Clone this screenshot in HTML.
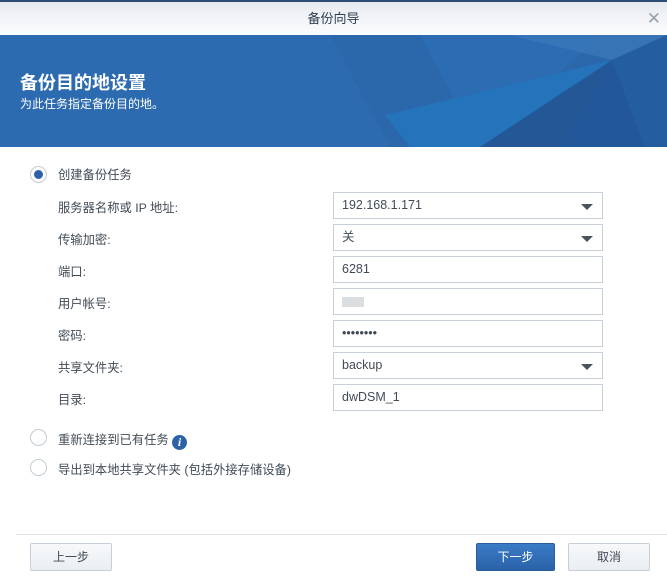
<!DOCTYPE html><html><head><meta charset="utf-8"><style>
*{margin:0;padding:0;box-sizing:border-box}
body{width:667px;height:579px;background:#fff;font-family:"Liberation Sans","Noto Sans CJK SC",sans-serif;font-size:12.3px;color:#414b55;position:relative;overflow:hidden}
.top{position:absolute;left:0;top:0;width:667px;height:2px;background:#2f4f78}
.tb{position:absolute;left:0;top:2px;width:667px;height:33px;background:linear-gradient(#e6eaf0,#fdfdfe);text-align:center;line-height:33px;font-size:13px;color:#2f3e50}
.x{position:absolute;right:6px;top:0;color:#9aa3ad;font-size:17px}
.ban{position:absolute;left:0;top:35px;width:667px;height:112px;background:#2d6bb0;overflow:hidden}
.ban h1{position:absolute;left:20px;top:34px;font-size:18px;color:#fff;font-weight:bold}
.ban p{position:absolute;left:20px;top:60px;font-size:12px;color:#fff}
.lab{position:absolute;left:58px}
.f{position:absolute;left:333px;width:270px;height:27px;border:1px solid #c7d0da;line-height:25px;padding-left:8px;font-size:12.5px;color:#414b55}
.f.dd:after{content:"";position:absolute;right:9px;top:11px;border-left:6px solid transparent;border-right:6px solid transparent;border-top:6px solid #4a535c}
.r{position:absolute;left:30px;width:17px;height:17px;border:1px solid #c3ccd6;border-radius:50%;background:#fff}
.r.on:after{content:"";position:absolute;left:3px;top:3px;width:9px;height:9px;border-radius:50%;background:#2c62a8}
.btn{position:absolute;top:543px;height:28px;border:1px solid #c6ced7;border-radius:2px;background:linear-gradient(#f7f9fb,#eaeef2);text-align:center;line-height:26px;font-size:12px}
</style></head><body>
<div class="top"></div>
<div class="tb">备份向导<span class="x">✕</span></div>
<div class="ban">
<svg width="667" height="112" style="position:absolute;left:0;top:0">
<polygon points="330,0 667,0 667,112 390,112" fill="#2b67ab"/>
<polygon points="420,0 600,0 480,112" fill="#2c6cb2"/>
<polygon points="510,0 667,0 612,25" fill="#3a78b8" opacity=".8"/>
<polygon points="612,25 667,0 667,112 612,112" fill="#245e9f"/>
<polygon points="385,80 612,25 520,112 410,112" fill="#2573bb"/>
<polygon points="480,112 612,25 560,112" fill="#235795"/>
<polygon points="612,25 645,112 560,112" fill="#22589a"/>
</svg>
<h1>备份目的地设置</h1><p>为此任务指定备份目的地。</p></div>
<div class="r on" style="top:166px"></div><div class="lab" style="top:165px">创建备份任务</div>
<div class="lab" style="top:198px">服务器名称或 IP 地址:</div>
<div class="lab" style="top:230px">传输加密:</div>
<div class="lab" style="top:262px">端口:</div>
<div class="lab" style="top:294px">用户帐号:</div>
<div class="lab" style="top:326px">密码:</div>
<div class="lab" style="top:358px">共享文件夹:</div>
<div class="lab" style="top:390px">目录:</div>
<div class="f dd" style="top:192px">192.168.1.171</div>
<div class="f dd" style="top:224px">关</div>
<div class="f" style="top:256px">6281</div>
<div class="f" style="top:288px"><span style="display:inline-block;width:22px;height:10px;background:#ccd0d4;margin-top:8px;opacity:.7"></span></div>
<div class="f" style="top:320px">••••••••</div>
<div class="f dd" style="top:352px">backup</div>
<div class="f" style="top:384px">dwDSM_1</div>
<div class="r" style="top:429px"></div><div class="lab" style="top:430px">重新连接到已有任务 <span style="display:inline-block;width:15px;height:15px;border-radius:50%;background:#2c62a8;color:#fff;font:bold italic 12px 'Liberation Serif',serif;text-align:center;line-height:15px;vertical-align:-2px">i</span></div>
<div class="r" style="top:459px"></div><div class="lab" style="top:460px">导出到本地共享文件夹 (包括外接存储设备)</div>
<div style="position:absolute;left:16px;top:534px;width:651px;height:1px;background:#dde2e7"></div>
<div class="btn" style="left:30px;width:82px">上一步</div>
<div class="btn" style="left:476px;width:79px;background:linear-gradient(#3a7cc6,#2a62a8);border-color:#2a5d9e;color:#fff">下一步</div>
<div class="btn" style="left:568px;width:82px">取消</div>
</body></html>
